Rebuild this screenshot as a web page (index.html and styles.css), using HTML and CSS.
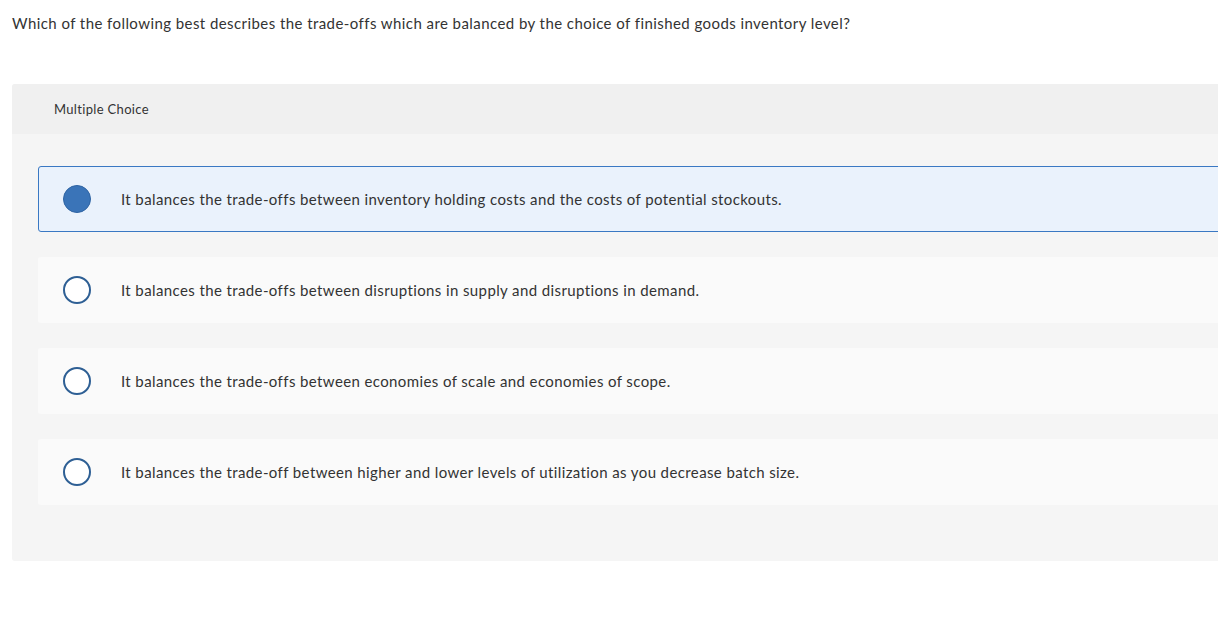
FILE: index.html
```html
<!DOCTYPE html>
<html lang="en">
<head>
<meta charset="utf-8">
<title>Multiple Choice</title>
<link rel="stylesheet" href="styles.css">
</head>
<body>
<div class="page">
  <p class="question">Which of the following best describes the trade-offs which are balanced by the choice of finished goods inventory level?</p>
  <section class="panel">
    <header class="panel-head">Multiple Choice</header>
    <div class="options">
      <label class="option selected">
        <span class="radio"></span>
        <span class="option-text">It balances the trade-offs between inventory holding costs and the costs of potential stockouts.</span>
      </label>
      <label class="option">
        <span class="radio"></span>
        <span class="option-text">It balances the trade-offs between disruptions in supply and disruptions in demand.</span>
      </label>
      <label class="option">
        <span class="radio"></span>
        <span class="option-text">It balances the trade-offs between economies of scale and economies of scope.</span>
      </label>
      <label class="option">
        <span class="radio"></span>
        <span class="option-text">It balances the trade-off between higher and lower levels of utilization as you decrease batch size.</span>
      </label>
    </div>
  </section>
</div>
</body>
</html>
```
FILE: styles.css
```css
html, body {
  margin: 0;
  padding: 0;
  background: #ffffff;
  overflow: hidden;
}
body {
  font-family: Lato, "Liberation Sans", sans-serif;
  color: #333333;
}
.page {
  padding: 0 0 0 12px;
  width: 1240px;
}
.question {
  margin: 0;
  padding-top: 14px;
  font-size: 15px;
  line-height: 19px;
  letter-spacing: 0.43px;
  height: 70px;
}
.panel {
  background: #f5f5f5;
  border-radius: 3px;
  padding-bottom: 56px;
}
.panel-head {
  background: #f0f0f0;
  height: 50px;
  display: flex;
  align-items: center;
  padding-left: 42px;
  font-size: 13px;
  letter-spacing: 0.33px;
  border-radius: 3px 3px 0 0;
}
.options {
  display: flex;
  flex-direction: column;
  gap: 25px;
  padding: 32px 0 0 26px;
}
.option {
  display: flex;
  align-items: center;
  height: 64px;
  border: 1px solid transparent;
  background: #fafafa;
  border-radius: 3px;
  font-size: 15px;
  letter-spacing: 0.39px;
}
.option.selected {
  background: #eaf2fc;
  border-color: #3a78c3;
}
.radio {
  box-sizing: border-box;
  width: 28px;
  height: 28px;
  border-radius: 50%;
  border: 2px solid #2e5f94;
  background: #ffffff;
  margin-left: 24px;
  margin-right: 30px;
  flex: none;
}
.option.selected .radio {
  background: #3a74b8;
  border: 1px solid #2f64a3;
}
```
